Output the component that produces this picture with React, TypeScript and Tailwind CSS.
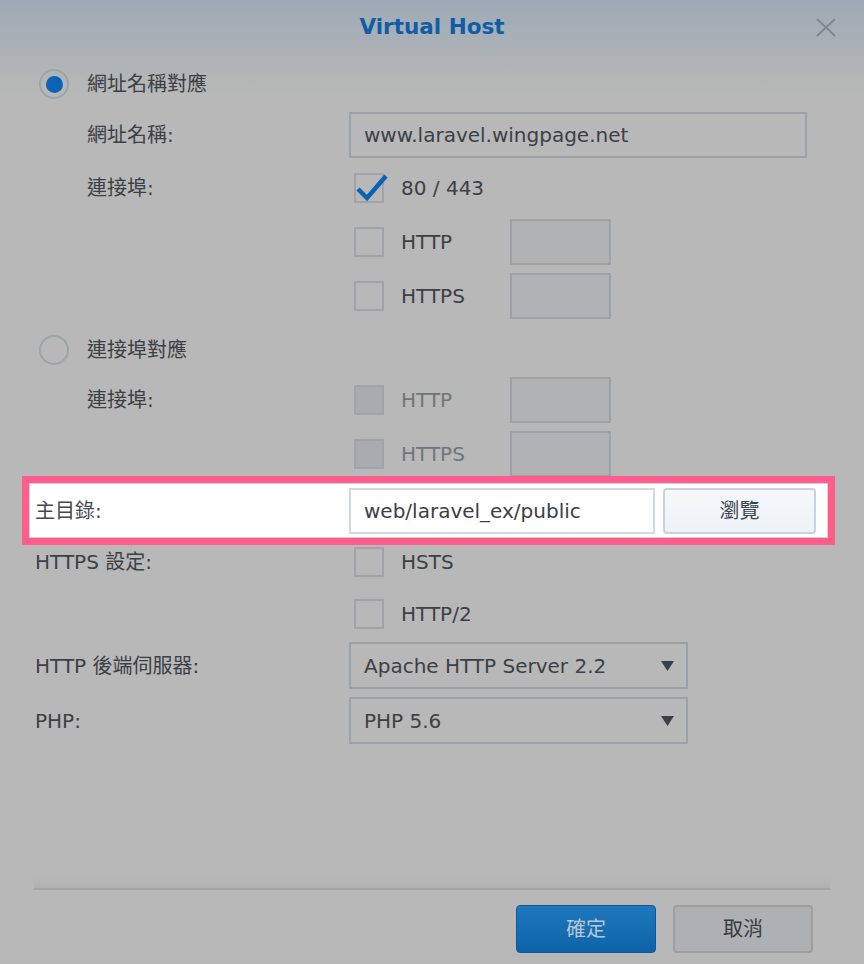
import React from "react";

const font = { fontFamily: '"DejaVu Sans", "Noto Sans CJK TC", sans-serif' };

function Radio({ on }: { on?: boolean }) {
  return (
    <div className="flex h-[30px] w-[30px] items-center justify-center rounded-full border-2 border-[#9ea3a8]">
      {on && <div className="h-[17px] w-[17px] rounded-full bg-[#0a63b3]" />}
    </div>
  );
}

function Check({ on, disabled }: { on?: boolean; disabled?: boolean }) {
  return (
    <div
      className={
        "relative ml-[5px] h-[30px] w-[30px] border-2 " +
        (disabled ? "border-[#a0a4a8] bg-[#a9acaf]" : "border-[#a0a4a9]")
      }
    >
      {on && (
        <svg className="absolute left-[-2px] top-[-2px] overflow-visible" width="34" height="34" viewBox="0 0 34 34">
          <path d="M4 16 L13 25 L32 3" fill="none" stroke="#0a63b3" strokeWidth="4.5" strokeLinejoin="miter" />
        </svg>
      )}
    </div>
  );
}

function SmallBox() {
  return <div className="h-[46px] w-[101px] border-2 border-[#9ea2a7] bg-[#b1b2b4]" />;
}

function Label({ children, indent }: { children?: React.ReactNode; indent?: boolean }) {
  return <div className={"w-[314px] shrink-0 " + (indent ? "pl-[52px]" : "")}>{children}</div>;
}

function Select({ value }: { value: string }) {
  return (
    <div className="flex h-[47px] w-[339px] items-center justify-between border-2 border-[#9ca1a7] pl-[13px] pr-[12px]">
      <span>{value}</span>
      <svg width="13" height="10" viewBox="0 0 13 10">
        <path d="M0 0 H13 L6.5 10 Z" fill="#3b4046" />
      </svg>
    </div>
  );
}

export default function App() {
  return (
    <div
      className="flex h-[964px] w-[864px] flex-col overflow-hidden bg-[linear-gradient(to_bottom,#9eaab6_0px,#b8b8b8_95px)] text-[20px] text-[#3b4046]"
      style={font}
    >
      {/* title bar */}
      <div className="relative flex h-[54px] shrink-0 items-center justify-center">
        <span className="text-[21.5px] font-bold text-[#0f5ea5]">Virtual Host</span>
        <svg className="absolute right-[28px] top-[18px]" width="20" height="19" viewBox="0 0 20 19">
          <path d="M1 1 L19 18 M19 1 L1 18" stroke="#7f8790" strokeWidth="2" />
        </svg>
      </div>

      <div className="flex flex-1 flex-col pl-[35px]">
        <div className="mt-[15px] flex h-[30px] items-center gap-[18px] pl-[4px]">
          <Radio on />
          <span>網址名稱對應</span>
        </div>

        <div className="mt-[13px] flex h-[46px] items-center">
          <Label indent>網址名稱:</Label>
          <div className="flex h-[46px] w-[458px] items-center border-2 border-[#9ca1a7] pl-[13px]">
            www.laravel.wingpage.net
          </div>
        </div>

        <div className="mt-[15px] flex h-[30px] items-center">
          <Label indent>連接埠:</Label>
          <Check on />
          <span className="ml-[17px]">80 / 443</span>
        </div>

        <div className="mt-[16px] flex h-[46px] items-center">
          <Label indent />
          <Check />
          <span className="ml-[17px] w-[109px]">HTTP</span>
          <SmallBox />
        </div>

        <div className="mt-[8px] flex h-[46px] items-center">
          <Label indent />
          <Check />
          <span className="ml-[17px] w-[109px]">HTTPS</span>
          <SmallBox />
        </div>

        <div className="mt-[16px] flex h-[30px] items-center gap-[18px] pl-[4px]">
          <Radio />
          <span>連接埠對應</span>
        </div>

        <div className="mt-[12px] flex h-[46px] items-center">
          <Label indent>連接埠:</Label>
          <Check disabled />
          <span className="ml-[17px] w-[109px] text-[#6f757c]">HTTP</span>
          <SmallBox />
        </div>

        <div className="mt-[8px] flex h-[46px] items-center">
          <Label indent />
          <Check disabled />
          <span className="ml-[17px] w-[109px] text-[#6f757c]">HTTPS</span>
          <SmallBox />
        </div>

        {/* highlighted row */}
        <div className="ml-[-13px] mt-[-1px] h-[69px] w-[813px] border-[7px] border-[#ff5e8c]">
          <div className="flex h-full items-center border border-[#cfd0d2] bg-white pl-[5px] text-[#44494f]">
            <div className="w-[314px] shrink-0">主目錄:</div>
            <div className="flex h-[46px] w-[306px] items-center border-2 border-[#d2d9e0] pl-[13px] text-[#3b4046]">
              web/laravel_ex/public
            </div>
            <div className="ml-[8px] flex h-[46px] w-[153px] items-center justify-center rounded-[4px] border-2 border-[#c9d2dc] bg-[linear-gradient(to_bottom,#f6f8fb,#edf2f7)] text-[#3a4450]">
              瀏覽
            </div>
          </div>
        </div>

        <div className="mt-[2px] flex h-[30px] items-center">
          <Label>HTTPS 設定:</Label>
          <Check />
          <span className="ml-[17px]">HSTS</span>
        </div>

        <div className="mt-[22px] flex h-[30px] items-center">
          <Label />
          <Check />
          <span className="ml-[17px]">HTTP/2</span>
        </div>

        <div className="mt-[13px] flex h-[47px] items-center">
          <Label>HTTP 後端伺服器:</Label>
          <Select value="Apache HTTP Server 2.2" />
        </div>

        <div className="mt-[8px] flex h-[47px] items-center">
          <Label>PHP:</Label>
          <Select value="PHP 5.6" />
        </div>
      </div>

      {/* footer */}
      <div className="mx-[34px] h-[14px] shrink-0 border-b-2 border-[#a3a3a3] bg-[linear-gradient(to_bottom,#b8b8b8,#b1b1b1)]" />
      <div className="flex h-[74px] shrink-0 justify-end gap-[17px] pr-[51px] pt-[15px]">
        <div className="flex h-[48px] w-[140px] items-center justify-center rounded-[4px] border border-[#0c5896] bg-[linear-gradient(to_bottom,#1f78bc,#0e63a7)] text-[#b7c7d8]">
          確定
        </div>
        <div className="flex h-[48px] w-[140px] items-center justify-center rounded-[4px] border-2 border-[#9b9fa4] bg-[#aeb1b4] text-[#3a3a3a]">
          取消
        </div>
      </div>
    </div>
  );
}
